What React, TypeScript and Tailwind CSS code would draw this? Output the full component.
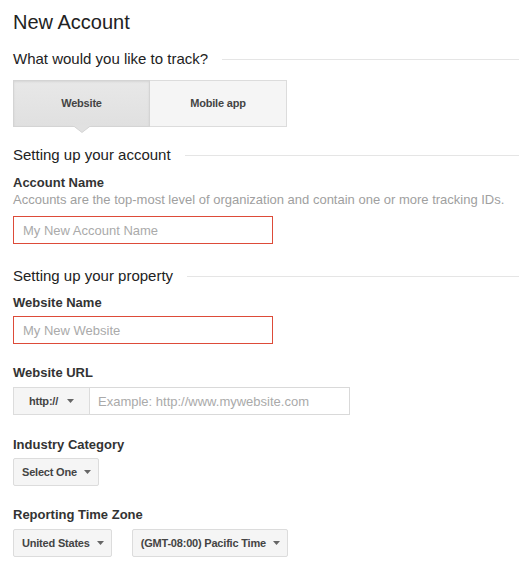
const FONT = { fontFamily: '"Liberation Sans", Arial, sans-serif' };

function SectionHeading({ children, className = '' }: { children: React.ReactNode; className?: string }) {
  return (
    <div className={`flex items-center gap-[14px] ${className}`}>
      <h2 className="text-[15px] leading-[20px] text-[#222] whitespace-nowrap">{children}</h2>
      <div className="h-px flex-1 bg-[#e5e5e5]" />
    </div>
  );
}

function Label({ children, className = '' }: { children: React.ReactNode; className?: string }) {
  return <div className={`text-[13px] leading-[16px] font-bold text-[#333] ${className}`}>{children}</div>;
}

function Caret() {
  return (
    <svg width="7" height="4" viewBox="0 0 7 4" className="shrink-0">
      <path d="M0 0 H7 L3.5 4 Z" fill="#666" />
    </svg>
  );
}

function DropButton({ label }: { label: string }) {
  return (
    <button className="flex items-center gap-[7px] h-[28px] pl-[8px] pr-[7px] bg-[#f5f5f5] border border-[#dcdcdc] rounded-[2px] text-[11px] font-bold tracking-[-0.2px] text-[#444] whitespace-nowrap">
      <span>{label}</span>
      <Caret />
    </button>
  );
}

export default function App() {
  return (
    <div className="w-[519px] h-[575px] bg-white pl-[13px] pt-[10px]" style={FONT}>
      <h1 className="text-[20px] leading-[24px] text-[#222]">New Account</h1>

      <SectionHeading className="mt-[15px]">What would you like to track?</SectionHeading>

      <div className="mt-[11px] flex w-[274px] h-[47px]">
        <div className="relative w-[137px] flex items-center justify-center border border-[#d4d4d4] bg-gradient-to-b from-[#e8e8e8] to-[#e0e0e0] shadow-[inset_0_1px_2px_rgba(0,0,0,0.08)] text-[11px] font-bold tracking-[-0.2px] text-[#444]">
          Website
          <svg className="absolute left-1/2 -translate-x-1/2 top-full -mt-px" width="18" height="8" viewBox="0 0 18 8">
            <path d="M0 0.5 L9 7.5 L18 0.5" fill="#e1e1e1" stroke="#d4d4d4" strokeWidth="1" />
            <rect x="0" y="0" width="18" height="1" fill="#e1e1e1" />
          </svg>
        </div>
        <div className="w-[137px] flex items-center justify-center border border-l-0 border-[#dcdcdc] bg-[#f5f5f5] text-[11px] font-bold tracking-[-0.2px] text-[#444]">
          Mobile app
        </div>
      </div>

      <SectionHeading className="mt-[18px]">Setting up your account</SectionHeading>

      <Label className="mt-[10px]">Account Name</Label>
      <p className="mt-[1px] text-[13px] leading-[16px] text-[#a0a0a0]">
        Accounts are the top-most level of organization and contain one or more tracking IDs.
      </p>
      <input
        className="mt-[8px] block w-[260px] h-[28px] px-[9px] border border-[#dd4b39] text-[13px] outline-none placeholder:text-[#aaa]"
        placeholder="My New Account Name"
      />

      <SectionHeading className="mt-[22px]">Setting up your property</SectionHeading>

      <Label className="mt-[9px]">Website Name</Label>
      <input
        className="mt-[5px] block w-[260px] h-[28px] px-[9px] border border-[#dd4b39] text-[13px] outline-none placeholder:text-[#aaa]"
        placeholder="My New Website"
      />

      <Label className="mt-[21px]">Website URL</Label>
      <div className="mt-[6px] flex h-[28px]">
        <button className="flex items-center justify-center gap-[9px] w-[77px] bg-[#f5f5f5] border border-[#dcdcdc] text-[11px] font-bold tracking-[-0.2px] text-[#444]">
          <span>http://</span>
          <Caret />
        </button>
        <input
          className="w-[260px] h-full px-[8px] border border-l-0 border-[#d9d9d9] text-[13px] outline-none placeholder:text-[#aaa]"
          placeholder="Example: http://www.mywebsite.com"
        />
      </div>

      <Label className="mt-[22px]">Industry Category</Label>
      <div className="mt-[5px] flex">
        <DropButton label="Select One" />
      </div>

      <Label className="mt-[21px]">Reporting Time Zone</Label>
      <div className="mt-[6px] flex gap-[20px]">
        <DropButton label="United States" />
        <DropButton label="(GMT-08:00) Pacific Time" />
      </div>
    </div>
  );
}
